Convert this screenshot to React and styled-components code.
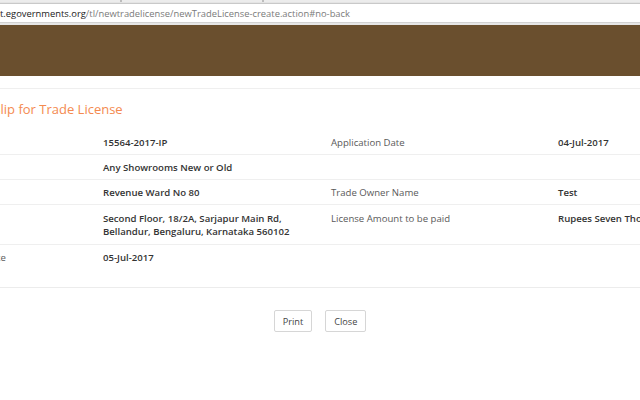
import React from 'react';
import styled, { createGlobalStyle } from 'styled-components';

const GlobalStyle = createGlobalStyle`
  html, body {
    margin: 0;
    padding: 0;
    background: #ffffff;
    overflow: hidden;
  }
  body {
    font-family: "Open Sans", "Noto Sans", sans-serif;
  }
`;

const Screen = styled.div`
  width: 640px;
  height: 400px;
  overflow: hidden;
  background: #ffffff;
`;

const TabStrip = styled.div`
  height: 3px;
  background: #e4e4e4;
  border-bottom: 1px solid #c9c9c9;
  display: flex;
`;

const TabEdge = styled.div`
  width: ${(p) => p.w}px;
  height: 2px;
  background: ${(p) => (p.dark ? '#bdbdbd' : '#ececec')};
`;

const UrlBar = styled.div`
  height: 18px;
  display: flex;
  align-items: center;
  background: #ffffff;
  font-family: "Open Sans", sans-serif;
  font-size: 9.4px;
  white-space: nowrap;
  border-bottom: 1px solid #d2d2d2;
`;

const Host = styled.span`
  color: #222222;
`;

const Path = styled.span`
  color: #7b7b7b;
`;

const UrlShadow = styled.div`
  height: 2px;
  background: #e6e6e6;
`;

const Header = styled.div`
  height: 51px;
  background: #6a4f2e;
`;

const Page = styled.div`
  width: 896px;
  margin-left: -128px;
  padding-top: 12px;
`;

const Panel = styled.div`
  border-top: 1px solid #efefef;
  border-bottom: 1px solid #ececec;
  padding-bottom: 18px;
`;

const Title = styled.div`
  color: #f48a50;
  font-size: 13px;
  line-height: 17px;
  padding: 12px 6px 12px;
`;

const Table = styled.div`
  display: grid;
  grid-template-columns: 223px 228px 227px 218px;
`;

const Cell = styled.div`
  padding: ${(p) => (p.tall ? '7px 8px 6px' : '6px 8px 5px')};
  font-size: 9.6px;
  line-height: 13px;
  color: ${(p) => (p.value ? '#333333' : '#5a5a5a')};
  font-weight: ${(p) => (p.value ? 600 : 400)};
  border-top: ${(p) => (p.first ? 'none' : '1px solid #efefef')};
  white-space: nowrap;
`;

const Actions = styled.div`
  display: flex;
  justify-content: center;
  gap: 13px;
  padding-top: 22px;
`;

const Button = styled.button`
  height: 22px;
  padding: 0 8px;
  background: #ffffff;
  border: 1px solid #d6d6d6;
  border-radius: 2px;
  font-family: "Open Sans", sans-serif;
  font-size: 9.2px;
  color: #444444;
  cursor: pointer;
`;

const rows = [
  ['Application Number', '15564-2017-IP', 'Application Date', '04-Jul-2017'],
  ['Trade Category', 'Any Showrooms New or Old', '', ''],
  ['Ward', 'Revenue Ward No 80', 'Trade Owner Name', 'Test'],
  [
    'Trade Address',
    'Second Floor, 18/2A, Sarjapur Main Rd,\nBellandur, Bengaluru, Karnataka 560102',
    'License Amount to be paid',
    'Rupees Seven Thousand Only',
  ],
  ['Expected License Issue Date', '05-Jul-2017', '', ''],
];

const App = () => {
  return (
    <Screen>
      <GlobalStyle />
      <TabStrip>
        <TabEdge w={120} />
        <TabEdge w={2} dark />
        <TabEdge w={140} />
        <TabEdge w={2} dark />
        <TabEdge w={376} />
      </TabStrip>
      <UrlBar>
        <Host>t.egovernments.org</Host>
        <Path>/tl/newtradelicense/newTradeLicense-create.action#no-back</Path>
      </UrlBar>
      <UrlShadow />
      <Header />
      <Page>
        <Panel>
          <Title>Acknowledgement Slip for Trade License</Title>
          <Table>
            {rows.map((row, i) =>
              row.map((text, j) => (
                <Cell
                  key={i + '-' + j}
                  value={j % 2 === 1}
                  first={i === 0}
                  tall={row[1].includes('\n')}
                >
                  {text.split('\n').map((line, k) => (
                    <div key={k}>{line || '\u00a0'}</div>
                  ))}
                </Cell>
              ))
            )}
          </Table>
        </Panel>
        <Actions>
          <Button>Print</Button>
          <Button>Close</Button>
        </Actions>
      </Page>
    </Screen>
  );
};

export default App;
